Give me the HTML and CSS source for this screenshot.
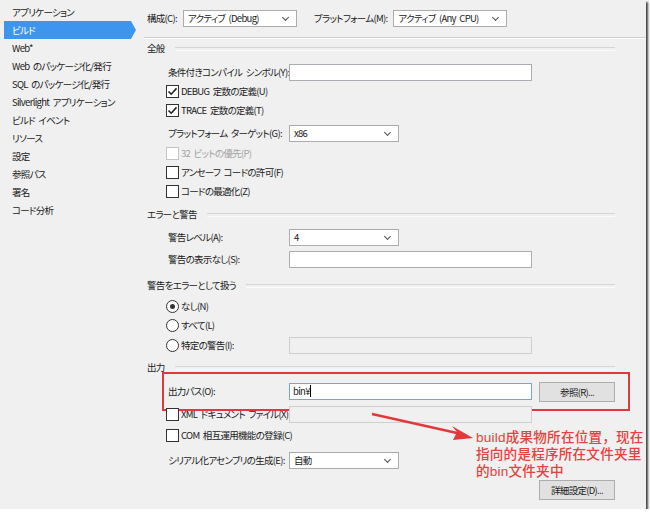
FILE: index.html
```html
<!DOCTYPE html>
<html>
  <head>
    <meta charset="utf-8">
    <link rel="stylesheet" href="styles.css">
  </head>
  <body>
    <div class="window">
      <ul class="nav">
        <li>アプリケーション</li>
        <li class="active">ビルド</li>
        <li>Web*</li>
        <li>Web のパッケージ化/発行</li>
        <li>SQL のパッケージ化/発行</li>
        <li>Silverlight アプリケーション</li>
        <li>ビルド イベント</li>
        <li>リソース</li>
        <li>設定</li>
        <li>参照パス</li>
        <li>署名</li>
        <li>コード分析</li>
      </ul>

      <div class="page">
        <div class="config">
          <span>構成(C):</span>
          <div class="combo combo-config">アクティブ (Debug)</div>
          <span class="platform-label">プラットフォーム(M):</span>
          <div class="combo combo-config">アクティブ (Any CPU)</div>
        </div>
        <div class="sep"></div>

        <div class="head"><span>全般</span></div>
        <div class="row field g5">
          <span class="label">条件付きコンパイル シンボル(Y):</span>
          <div class="text wide"></div>
        </div>
        <div class="row check">
          <span class="box on"><svg width="13" height="13" viewBox="0 0 13 13"><path d="M2.5 6.5 L5.2 9.2 L10.5 3.4" /></svg></span>
          <span>DEBUG 定数の定義(U)</span>
        </div>
        <div class="row check">
          <span class="box on"><svg width="13" height="13" viewBox="0 0 13 13"><path d="M2.5 6.5 L5.2 9.2 L10.5 3.4" /></svg></span>
          <span>TRACE 定数の定義(T)</span>
        </div>
        <div class="row field g4">
          <span class="label">プラットフォーム ターゲット(G):</span>
          <div class="combo">x86</div>
        </div>
        <div class="row check disabled g1">
          <span class="box"></span>
          <span>32 ビットの優先(P)</span>
        </div>
        <div class="row check">
          <span class="box"></span>
          <span>アンセーフ コードの許可(F)</span>
        </div>
        <div class="row check">
          <span class="box"></span>
          <span>コードの最適化(Z)</span>
        </div>

        <div class="head g4"><span>エラーと警告</span></div>
        <div class="row field g4">
          <span class="label">警告レベル(A):</span>
          <div class="combo">4</div>
        </div>
        <div class="row field g3">
          <span class="label">警告の表示なし(S):</span>
          <div class="text wide"></div>
        </div>

        <div class="head g7"><span>警告をエラーとして扱う</span></div>
        <div class="row check g2">
          <span class="radio on"></span>
          <span>なし(N)</span>
        </div>
        <div class="row check">
          <span class="radio"></span>
          <span>すべて(L)</span>
        </div>
        <div class="row check g1">
          <span class="radio"></span>
          <span class="check-label">特定の警告(I):</span>
          <div class="text wide off"></div>
        </div>

        <div class="head g3"><span>出力</span></div>
        <div class="row field g5 marked">
          <span class="label">出力パス(O):</span>
          <div class="text wide focus">bin¥<i class="caret"></i></div>
          <div class="button">参照(R)...</div>
        </div>
        <div class="row check g4">
          <span class="box"></span>
          <span class="check-label">XML ドキュメント ファイル(X):</span>
          <div class="text wide off"></div>
        </div>
        <div class="row check g2">
          <span class="box"></span>
          <span>COM 相互運用機能の登録(C)</span>
        </div>
        <div class="row field g6">
          <span class="label">シリアル化アセンブリの生成(E):</span>
          <div class="combo">自動</div>
        </div>
        <div class="row advanced g10">
          <div class="button">詳細設定(D)...</div>
        </div>
      </div>

      <div class="notes">
        <svg class="arrow" width="646" height="509" viewBox="0 0 646 509">
          <path d="M372 414 L457 433" />
          <polygon points="473,438 453,440 457,432 452,426" />
        </svg>
        <div class="note-text">build成果物所在位置，现在<br>指向的是程序所在文件夹里<br>的bin文件夹中</div>
      </div>
    </div>
  </body>
</html>
```

FILE: styles.css
```css
html {
  font-family: "Noto Sans CJK JP", "Noto Sans", sans-serif;
  font-size: 9.5px;
  letter-spacing: -0.7px;
  word-spacing: 2px;
  font-feature-settings: "palt";
  color: #1a1a1a;
}

* {
  box-sizing: border-box;
}

body {
  margin: 0;
  background: #fff;
}

.window {
  position: relative;
  display: flex;
  width: 646px;
  height: 509px;
  background: #f0f0f0;
  box-shadow: 2px 2px 2px rgba(0, 0, 0, 0.75);
}

/* left navigation */

.nav {
  list-style: none;
  margin: 0;
  padding: 3px 0 0 0;
  width: 144px;
}

.nav li {
  height: 18px;
  line-height: 18px;
  padding-left: 12px;
  white-space: nowrap;
}

.nav li.active {
  position: relative;
  margin-left: 4px;
  padding-left: 8px;
  width: 127px;
  background: #3d95ee;
  color: #fff;
}

.nav li.active:after {
  content: "";
  position: absolute;
  right: -5px;
  top: 0;
  border-left: 5px solid #3d95ee;
  border-top: 9px solid transparent;
  border-bottom: 9px solid transparent;
}

/* main page */

.page {
  flex: 1;
  line-height: 1;
}

.config {
  display: flex;
  align-items: center;
  height: 17px;
  margin-top: 10px;
  padding-left: 3px;
}

.config .combo-config {
  width: 114px;
  margin-left: 6px;
}

.config .platform-label {
  margin-left: 17px;
}

.sep {
  margin-top: 10px;
  height: 2px;
  border-top: 1px solid #cfcfcf;
  border-bottom: 1px solid #fff;
}

.head {
  display: flex;
  align-items: center;
  height: 19px;
  margin-right: 31px;
  padding-left: 3px;
}

.head:after {
  content: "";
  flex: 1;
  margin-left: 10px;
  height: 2px;
  border-top: 1px solid #d5d5d5;
  border-bottom: 1px solid #fbfbfb;
}

.row {
  position: relative;
  display: flex;
  align-items: center;
  height: 19px;
  padding-left: 22px;
}

.row .label {
  width: 123px;
  padding-left: 2px;
  white-space: nowrap;
}

.row .check-label {
  width: 108px;
  white-space: nowrap;
}

.g1 { margin-top: 1px; }
.g2 { margin-top: 2px; }
.g3 { margin-top: 3px; }
.g4 { margin-top: 4px; }
.g5 { margin-top: 5px; }
.g6 { margin-top: 6px; }
.g7 { margin-top: 7px; }
.g10 { margin-top: 10px; }

/* controls */

.combo {
  position: relative;
  width: 110px;
  height: 17px;
  line-height: 15px;
  padding-left: 4px;
  background: #fff;
  border: 1px solid #acacac;
  white-space: nowrap;
}

.combo:after {
  content: "";
  position: absolute;
  right: 8px;
  top: 4px;
  width: 4px;
  height: 4px;
  border-right: 1.3px solid #505050;
  border-bottom: 1.3px solid #505050;
  transform: rotate(45deg);
}

.text {
  height: 17px;
  line-height: 15px;
  padding-left: 3px;
  background: #fff;
  border: 1px solid #abadb3;
}

.text.wide {
  width: 243px;
}

.text.off {
  background: #f0f0f0;
  border-color: #cfcfcf;
}

.text.focus {
  border-color: #6fa6db;
}

.caret {
  display: inline-block;
  width: 1px;
  height: 12px;
  vertical-align: -2px;
  background: #000;
}

.button {
  width: 76px;
  height: 20px;
  line-height: 18px;
  margin-left: 7px;
  text-align: center;
  background: #e1e1e1;
  border: 1px solid #adadad;
}

.advanced {
  padding-left: 388px;
}

.box,
.radio {
  width: 13px;
  height: 13px;
  margin-right: 2px;
  background: #fff;
  border: 1px solid #333;
  flex: none;
}

.box svg {
  display: block;
  margin: -1px;
  fill: none;
  stroke: #222;
  stroke-width: 1.6;
}

.radio {
  border-radius: 50%;
  position: relative;
}

.radio.on:after {
  content: "";
  position: absolute;
  left: 3px;
  top: 3px;
  width: 5px;
  height: 5px;
  border-radius: 50%;
  background: #333;
}

.disabled {
  color: #a3a3a3;
}

.disabled .box {
  border-color: #c3c3c3;
}

/* annotations */

.marked:before {
  content: "";
  position: absolute;
  left: 18px;
  top: -10px;
  width: 464px;
  height: 35px;
  border: 2px solid #e3373c;
}

.notes {
  position: absolute;
  left: 0;
  top: 0;
  width: 646px;
  height: 509px;
  pointer-events: none;
}

.arrow path {
  stroke: #e3373c;
  stroke-width: 2.4;
  fill: none;
}

.arrow polygon {
  fill: #e3373c;
}

.note-text {
  position: absolute;
  left: 476px;
  top: 429px;
  font-family: "Liberation Sans", "Noto Sans CJK SC", sans-serif;
  font-feature-settings: normal;
  font-size: 13.6px;
  font-weight: 500;
  letter-spacing: 0.2px;
  word-spacing: 0;
  line-height: 17px;
  color: #e8403e;
  white-space: nowrap;
}
```
